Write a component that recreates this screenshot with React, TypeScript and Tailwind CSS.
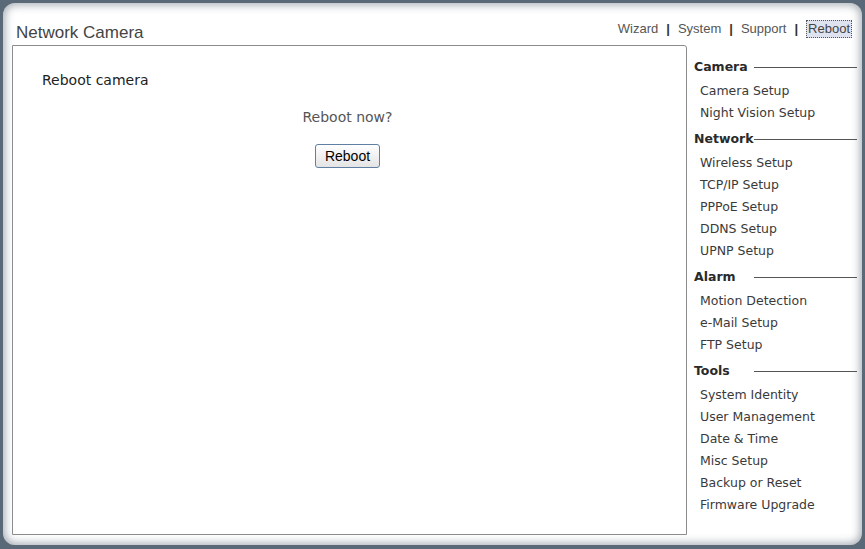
const menu = [
  { title: "Camera", items: ["Camera Setup", "Night Vision Setup"] },
  {
    title: "Network",
    items: ["Wireless Setup", "TCP/IP Setup", "PPPoE Setup", "DDNS Setup", "UPNP Setup"],
  },
  { title: "Alarm", items: ["Motion Detection", "e-Mail Setup", "FTP Setup"] },
  {
    title: "Tools",
    items: [
      "System Identity",
      "User Management",
      "Date & Time",
      "Misc Setup",
      "Backup or Reset",
      "Firmware Upgrade",
    ],
  },
];

const navLinks = ["Wizard", "System", "Support"];

const verdana = "font-['Verdana','DejaVu_Sans',sans-serif]";
const arial = "font-['Arial','Liberation_Sans',sans-serif]";

const TopNav = () => {
  return (
    <div className={`mt-[17px] mr-[5px] flex items-center text-[13px] leading-[16px] text-[#555] ${arial}`}>
      {navLinks.map((link) => (
        <span key={link} className="flex items-center">
          <span>{link}</span>
          <span className="mx-[8px] font-bold text-[#333]">|</span>
        </span>
      ))}
      <span className="border border-dotted border-[#555] bg-[#dfe3ef] px-[1px] text-[#444]">
        Reboot
      </span>
    </div>
  );
};

const SideMenu = () => {
  return (
    <div className={`flex w-[163px] flex-col pt-[11px] ${verdana}`}>
      {menu.map((section, i) => (
        <div key={section.title} className={i > 0 ? "mt-[4px]" : ""}>
          <div className="flex h-[22px] items-center">
            <span className="min-w-[60px] text-[12.5px] font-bold text-[#2a2a2a]">
              {section.title}
            </span>
            <div className="h-px flex-1 bg-[#555]" />
          </div>
          <div className="mt-[2px] flex flex-col">
            {section.items.map((item) => (
              <div key={item} className="h-[22px] pl-[6px] text-[12.5px] leading-[22px] text-[#3a3a3a]">
                {item}
              </div>
            ))}
          </div>
        </div>
      ))}
    </div>
  );
};

const App = () => {
  return (
    <div className="flex h-[549px] w-[865px] bg-[#596978] pt-[3px] pr-[3px] pb-[4px] pl-[3px]">
      <div className="flex flex-1 flex-col rounded-[12px] bg-white pr-[5px] pb-[10px] pl-[9px] shadow-[inset_0_0_8px_2px_rgba(60,75,90,0.45)]">
        <div className="flex h-[42px] items-start justify-between">
          <div className={`mt-[20px] ml-[4px] text-[17px] leading-[20px] text-[#444] ${arial}`}>
            Network Camera
          </div>
          <TopNav />
        </div>
        <div className="flex flex-1 gap-[7px]">
          <div className="flex w-[675px] flex-col rounded-tr-[3px] border border-[#8c8c8c] bg-white">
            <div className={`pt-[26px] pl-[29px] text-[14px] leading-[17px] text-[#222] ${verdana}`}>
              Reboot camera
            </div>
            <div className="flex flex-col items-center pr-[4px]">
              <div className={`mt-[20px] text-[14px] leading-[17px] text-[#555] ${verdana}`}>
                Reboot now?
              </div>
              <button
                className={`mt-[18px] h-[24px] w-[65px] rounded-[3px] border border-[#5f7fa3] bg-gradient-to-b from-[#ffffff] to-[#e4e4e4] text-[14px] leading-[20px] text-black ${arial}`}
              >
                Reboot
              </button>
            </div>
          </div>
          <SideMenu />
        </div>
      </div>
    </div>
  );
};

export default App;
